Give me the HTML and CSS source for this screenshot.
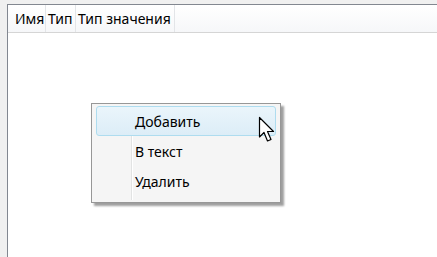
FILE: index.html
```html
<!DOCTYPE html>
<html lang="ru">
<head>
  <meta charset="UTF-8">
  <title>Список</title>
  <link rel="stylesheet" href="styles.css">
</head>
<body>
  <div class="list-view">
    <div class="list-header">
      <div class="col col-name">Имя</div>
      <div class="col col-type">Тип</div>
      <div class="col col-value">Тип значения</div>
      <div class="col col-rest"></div>
    </div>
    <div class="list-body"></div>
  </div>

  <!-- Контекстное меню -->
  <div class="context-menu">
    <div class="menu-gutter"></div>
    <div class="menu-item active">Добавить</div>
    <div class="menu-item">В текст</div>
    <div class="menu-item">Удалить</div>
  </div>

  <svg class="cursor" width="20" height="28" viewBox="0 0 20 28">
    <path d="M1.5 1.5 L1.5 21 L6 16.5 L9.5 25 L13 23.5 L9.5 15.5 L15.5 15.5 Z" fill="#fff" stroke="#000" stroke-width="1.2" stroke-linejoin="round"/>
  </svg>
</body>
</html>
```

FILE: styles.css
```css
* {
  box-sizing: border-box;
  margin: 0;
  padding: 0;
}

body {
  background-color: #f0f0f0;
  font-family: "Noto Sans", "Open Sans", sans-serif;
  font-size: 14px;
  color: #000;
  width: 437px;
  height: 257px;
  overflow: hidden;
  position: relative;
  padding: 4px 0 0 7px;
}

/* Список */
.list-view {
  background-color: #fff;
  border-top: 1px solid #828790;
  border-left: 1px solid #828790;
  height: 260px;
}

.list-header {
  display: flex;
  height: 28px;
  background: linear-gradient(#ffffff, #f6f7f9);
  border-bottom: 1px solid #d5d5d5;
}

.col {
  border-right: 1px solid #e3e5e8;
  line-height: 27px;
  padding-left: 2px;
  font-size: 14px;
  white-space: nowrap;
}

.col-name {
  width: 38px;
  padding-left: 7px;
}

.col-type {
  width: 30px;
}

.col-value {
  width: 99px;
}

.col-rest {
  flex: 1;
  border-right: none;
}

/* Контекстное меню */
.context-menu {
  position: absolute;
  left: 91px;
  top: 103px;
  width: 190px;
  height: 100px;
  background-color: #f5f5f5;
  border: 1px solid #979797;
  box-shadow: 3px 3px 2px rgba(0, 0, 0, 0.38);
  padding: 2px 4px 4px 4px;
}

.menu-gutter {
  position: absolute;
  left: 39px;
  top: 2px;
  bottom: 2px;
  width: 2px;
  border-left: 1px solid #e2e3e3;
  border-right: 1px solid #ffffff;
}

.menu-item {
  position: relative;
  height: 30px;
  line-height: 29px;
  padding-left: 38px;
  border: 1px solid transparent;
  border-radius: 3px;
}

.menu-item.active {
  background: linear-gradient(#eaf5fb, #dcedf7);
  border-color: #aedcef;
}

.cursor {
  position: absolute;
  left: 258px;
  top: 116px;
}
```
